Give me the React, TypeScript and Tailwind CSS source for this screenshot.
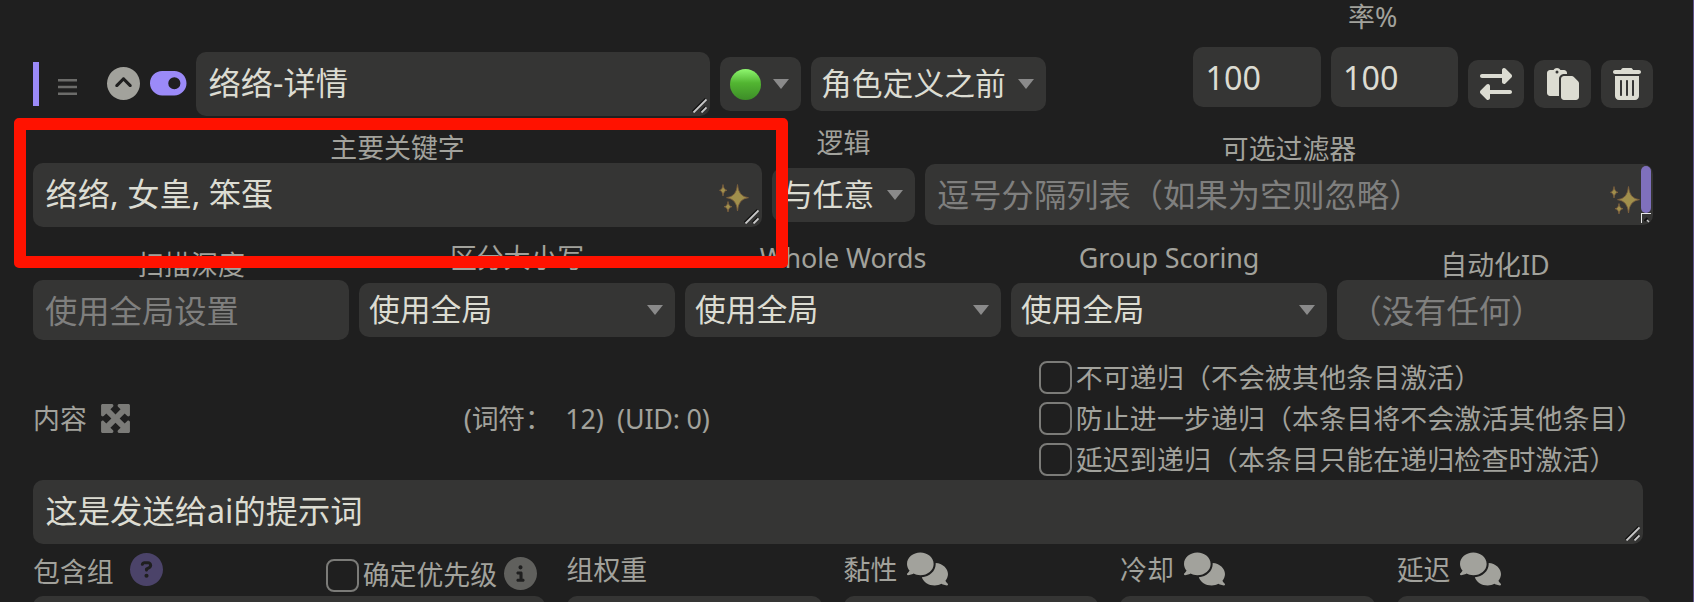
import type { ReactNode } from "react";
import {
  FaCircleChevronUp,
  FaCircleInfo,
  FaCircleQuestion,
  FaComments,
  FaMaximize,
  FaPaste,
  FaRightLeft,
  FaToggleOn,
  FaTrashCan,
} from "react-icons/fa6";

function Box({ className, children }: { className: string; children?: ReactNode }) {
  return <div className={`relative shrink-0 rounded-[10px] bg-[#353534] ${className}`}>{children}</div>;
}

function Label({ className, children }: { className?: string; children: ReactNode }) {
  return (
    <div className={`text-[26.9px] leading-[34px] whitespace-pre text-[#a2a29c] ${className ?? ""}`}>{children}</div>
  );
}

function Caret() {
  return (
    <svg width="16" height="10" viewBox="0 0 16 10" className="shrink-0">
      <path d="M0 0H16L8 10Z" fill="#8a8a8a" />
    </svg>
  );
}

function Select({ className, children }: { className: string; children: ReactNode }) {
  return (
    <Box className={`flex h-[54px] items-center justify-between pr-[12px] pl-[10px] text-[30.8px] ${className}`}>
      <span className="h-[54px] leading-[52px] whitespace-nowrap">{children}</span>
      <Caret />
    </Box>
  );
}

function Grip() {
  return (
    <svg width="15" height="15" viewBox="0 0 15 15" className="absolute right-[3px] bottom-[3px]">
      <path d="M0.5 13.5L13.5 0.5M8.5 13.5L13.5 8.5" stroke="#111" strokeWidth="1.6" />
      <path d="M1.5 14.5L14.5 1.5M9.5 14.5L14.5 9.5" stroke="#c8c8c8" strokeWidth="1.8" />
    </svg>
  );
}

function Sparkles({ className }: { className: string }) {
  return (
    <svg width="30" height="28" viewBox="0 0 30 28" className={`absolute ${className}`}>
      <g stroke="#7e5f3c" strokeWidth="0.8" fill="#a08f4c">
        <path d="M18.5 0.5Q19.3 12.7 29.5 13.7Q19.3 14.7 18.5 27Q17.7 14.7 7.500 13.700Q17.700 12.700 18.500 0.500Z" />
        <path d="M4 0.500Q4.500 5.800 8 6.300Q4.500 6.800 4 12Q3.500 6.800 0.500 6.300Q3.500 5.800 4 0.500Z" />
        <path d="M9 17.500Q9.500 22.200 13 22.700Q9.500 23.200 9 28Q8.500 23.200 5 22.700Q8.500 22.200 9 17.500Z" />
      </g>
    </svg>
  );
}

function Check() {
  return <span className="block size-[33px] shrink-0 rounded-[8px] border-2 border-[#7b7b78]" />;
}

const recursion = ["不可递归（不会被其他条目激活）", "防止进一步递归（本条目将不会激活其他条目）", "延迟到递归（本条目只能在递归检查时激活）"];
const matching = ["区分大小写", "Whole Words", "Group Scoring"];
const timing = ["黏性", "冷却", "延迟"];

export default function App() {
  return (
    <div className="relative h-[602px] w-[1694px] overflow-hidden border-r border-[#5d5288] bg-[#1f1f1f] pl-[33px] font-['Noto_Sans','Noto_Sans_CJK_SC',sans-serif] text-[32.3px] text-[#dcdcd2]">
      <div className="flex h-[118px] w-[1620px] items-start">
        <div className="mt-[62px] h-[44px] w-[6px] bg-[#9b8af8]" />
        <svg width="19" height="16" viewBox="0 0 19 16" className="mt-[79px] ml-[19px]">
          <path d="M0 1.300H19M0 8H19M0 14.700H19" stroke="#6c6c6a" strokeWidth="2.400" />
        </svg>
        <FaCircleChevronUp className="mt-[66.500px] ml-[30px] size-[33px] text-[#a2a29c]" />
        <FaToggleOn className="mt-[66.500px] ml-[10px] h-[32.500px] w-[36.500px] text-[#9b8af8]" />
        <Box className="mt-[52px] ml-[9.500px] h-[64px] w-[514px] pl-[12.500px] leading-[61px]">
          络络-详情
          <Grip />
        </Box>
        <Box className="mt-[57px] ml-[10px] flex h-[54px] w-[81px] items-center justify-between pr-[12px] pl-[10px]">
          <span className="block size-[31px] rounded-full bg-linear-to-b from-[#8ff76f] via-[#52b531] via-45% to-[#3d8d28]" />
          <Caret />
        </Box>
        <Select className="mt-[57px] ml-[10px] w-[235px]">角色定义之前</Select>
        <Box className="mt-[47px] ml-[147px] h-[60px] w-[128px] pl-[12.500px] leading-[60px]">100</Box>
        <div className="ml-[10px] w-[127px]">
          <Label className="h-[47px] pl-[17px]">率%</Label>
          <Box className="h-[60px] pl-[12px] leading-[60px]">100</Box>
        </div>
        <Box className="mt-[60px] ml-[10px] flex h-[48px] w-[56px] items-center justify-center">
          <FaRightLeft className="size-[32px]" />
        </Box>
        <Box className="mt-[60px] ml-[10px] flex h-[48px] w-[57px] items-center justify-center">
          <FaPaste className="size-[32px]" />
        </Box>
        <Box className="mt-[60px] ml-[10px] flex h-[48px] w-[52px] items-center justify-center">
          <FaTrashCan className="h-[32px] w-[28px]" />
        </Box>
      </div>

      <div className="flex h-[120px] w-[1620px] items-start gap-[10px]">
        <div className="w-[729px]">
          <Label className="mt-[13px] h-[32px] text-center">主要关键字</Label>
          <Box className="h-[64px] pl-[12.500px] leading-[61px]">
            络络, 女皇, 笨蛋
            <Sparkles className="top-[21px] right-[13px]" />
            <Grip />
          </Box>
        </div>
        <div className="w-[143px]">
          <Label className="mt-[8px] h-[42px] text-center">逻辑</Label>
          <Select className="w-[143px]">与任意</Select>
        </div>
        <div className="w-[728px]">
          <Label className="mt-[14px] h-[32px] text-center">可选过滤器</Label>
          <Box className="h-[61px] pl-[12px] leading-[61px] text-[#7f7f7e]">
            逗号分隔列表（如果为空则忽略）
            <Sparkles className="top-[22px] right-[13px]" />
            <span className="absolute top-[2px] right-[2px] h-[47px] w-[10px] rounded-full bg-[#7f70bd]" />
            <span className="absolute right-[2px] bottom-[2px] h-[10px] w-[10px] border-t border-l border-[#e8e8e8]" />
            <svg width="6" height="6" viewBox="0 0 6 6" className="absolute right-[3px] bottom-[2px]">
              <path d="M0.500 4L3.500 1" stroke="#111" strokeWidth="2" />
              <path d="M3 3L5 5" stroke="#c8c8c8" strokeWidth="1.400" />
            </svg>
          </Box>
        </div>
      </div>

      <div className="flex h-[123px] w-[1620px] items-start gap-[10px]">
        <div className="w-[316px]">
          <Label className="mt-[10px] h-[32px] text-center">扫描深度</Label>
          <Box className="h-[60px] pl-[12px] leading-[60px] text-[#7f7f7e]">使用全局设置</Box>
        </div>
        {matching.map((name) => (
          <div key={name} className="w-[316px]">
            <Label className="mt-[3px] h-[42px] text-center tracking-[-0.1px]">{name}</Label>
            <Select className="w-[316px]">使用全局</Select>
          </div>
        ))}
        <div className="w-[316px]">
          <Label className="mt-[10px] h-[32px] text-center">自动化ID</Label>
          <Box className="h-[60px] pl-[12.500px] leading-[60px] text-[#7f7f7e]">（没有任何）</Box>
        </div>
      </div>

      <div className="flex h-[119px] items-center pb-[4px]">
        <Label>内容</Label>
        <FaMaximize className="ml-[12px] size-[33px] text-[#7b7b78]" />
        <Label className="ml-[332px] w-[575px] tracking-[-0.2px]">{"(词符：  12)  (UID: 0)"}</Label>
        <div className="flex flex-col gap-[8px]">
          {recursion.map((text) => (
            <div key={text} className="flex h-[33px] items-center gap-[4px]">
              <Check />
              <Label className="tracking-[0.15px]">{text}</Label>
            </div>
          ))}
        </div>
      </div>

      <Box className="h-[64px] w-[1610px] pl-[12.500px] leading-[61px]">
        这是发送给ai的提示词
        <Grip />
      </Box>

      <div className="flex items-start gap-[22px]">
        <div className="w-[511.500px]">
          <div className="flex h-[52px] items-start">
            <Label className="mt-[11px]">包含组</Label>
            <FaCircleQuestion className="mt-[9px] ml-[16px] size-[33px] text-[#4b4369]" />
            <div className="mt-[15px] ml-[163px]">
              <Check />
            </div>
            <Label className="mt-[14px] ml-[4px]">确定优先级</Label>
            <FaCircleInfo className="mt-[13px] ml-[6.500px] size-[33px] text-[#60605d]" />
          </div>
          <Box className="h-[60px]" />
        </div>
        <div className="w-[255px]">
          <Label className="h-[52px] pt-[9px]">组权重</Label>
          <Box className="h-[60px]" />
        </div>
        {timing.map((name) => (
          <div key={name} className="w-[254.600px]">
            <div className="flex h-[52px] items-start">
              <Label className="mt-[9px]">{name}</Label>
              <FaComments className="mt-[5px] ml-[10px] h-[40px] w-[41px] text-[#a2a29c]" />
            </div>
            <Box className="h-[60px]" />
          </div>
        ))}
      </div>

      <div className="absolute top-[118px] left-[14px] h-[150px] w-[774px] rounded-[5px] border-[12px] border-[#ff1200]" />
    </div>
  );
}
